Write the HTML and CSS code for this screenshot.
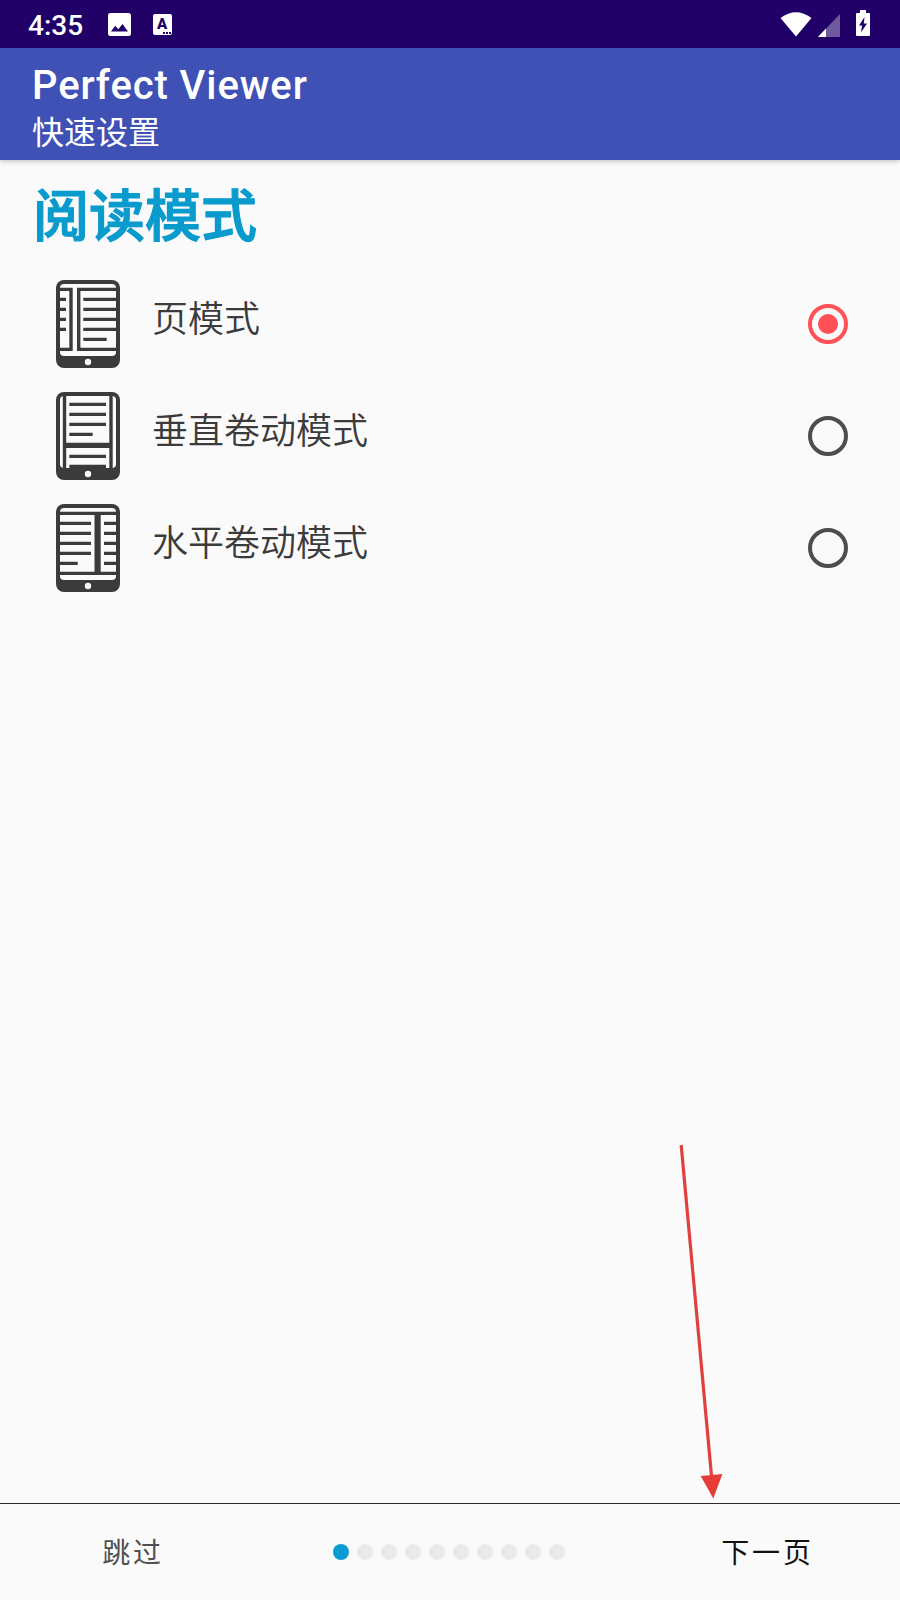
FILE: index.html
```html
<!DOCTYPE html>
<html lang="zh-CN">
<head>
<meta charset="utf-8">
<title>Perfect Viewer</title>
<link rel="stylesheet" href="styles.css">
</head>
<body>
<div class="screen">
  <div class="status-bar">
    <span class="clock">4:35</span>
    <svg class="status-photo" width="23" height="23" viewBox="0 0 23 23"><path fill="#fff" fill-rule="evenodd" d="M2.500 0h18a2.500 2.500 0 0 1 2.500 2.500v18a2.500 2.500 0 0 1-2.500 2.500h-18a2.500 2.500 0 0 1-2.500-2.500v-18a2.500 2.500 0 0 1 2.500-2.500zM3 18.500h17L14.500 11 10.300 16.300 7.300 12.800z"/></svg>
    <span class="status-input">A<svg class="input-dots" width="8" height="2" viewBox="0 0 8 2"><path fill="#210068" d="M0 0h2v2H0zM3 0h2v2H3zM6 0h2v2H6z"/></svg></span>
    <svg class="status-wifi" width="32" height="25" viewBox="0 0 32 25"><path fill="#fff" d="M0.500 6Q16-5.500 31.500 6L16 24.500z"/></svg>
    <svg class="status-signal" width="22" height="23" viewBox="0 0 22 23"><path fill="#fff" fill-opacity=".35" d="M22 0v23H0z"/><path fill="#fff" d="M8 14.500V23H0z"/></svg>
    <svg class="status-battery" width="14" height="26" viewBox="0 0 14 26"><path fill="#fff" fill-rule="evenodd" d="M4 0h6v3h3q1 0 1 1v21q0 1-1 1H1q-1 0-1-1V4q0-1 1-1h3zM8.500 7L3 15.500h3L5 22.500l6-9H7.800z"/></svg>
  </div>
  <header class="app-bar">
    <div class="app-title">Perfect Viewer</div>
    <div class="app-subtitle">快速设置</div>
  </header>
  <main class="content">
    <h1 class="heading">阅读模式</h1>
    <div class="option">
      <svg class="device" width="64" height="88" viewBox="0 0 64 88">
        <rect width="64" height="88" rx="8" fill="#3b3b3b"/>
        <rect x="4" y="4" width="56" height="72" rx="4" fill="#fafafa"/>
        <circle cx="32" cy="82" r="3.200" fill="#fafafa"/>
        <path class="ink" d="M4 9.400H15V69.400H4M60 9.400H22.700V69.400H60M4 19.400h6M4 29.400h6M4 39.400h6M4 49.400h6M27.300 19.400H60M27.300 29.400H60M27.300 39.400H60M27.300 49.400H60M27.300 59.400H50.700"/>
      </svg>
      <span class="label">页模式</span>
      <span class="radio checked"></span>
    </div>
    <div class="option">
      <svg class="device" width="64" height="88" viewBox="0 0 64 88">
        <rect width="64" height="88" rx="8" fill="#3b3b3b"/>
        <rect x="4" y="4" width="56" height="72" rx="4" fill="#fafafa"/>
        <circle cx="32" cy="82" r="3.200" fill="#fafafa"/>
        <path class="ink" d="M8.500 4V76M55 4V76M13.300 12.400H50M13.300 22.400H50M13.300 32.400H50M13.300 42.400H36.700M13.300 64.400H50M13.300 74.400H50"/>
        <path fill="#3b3b3b" d="M8 50.700h47v5.300H8z"/>
      </svg>
      <span class="label">垂直卷动模式</span>
      <span class="radio"></span>
    </div>
    <div class="option">
      <svg class="device" width="64" height="88" viewBox="0 0 64 88">
        <rect width="64" height="88" rx="8" fill="#3b3b3b"/>
        <rect x="4" y="4" width="56" height="72" rx="4" fill="#fafafa"/>
        <circle cx="32" cy="82" r="3.200" fill="#fafafa"/>
        <path class="ink" d="M4 9.400H60M4 69.400H60M4 19.400H35M4 29.400H35M4 39.400H35M4 49.400H35M4 59.400H21.700M48 19.400H60M48 29.400H60M48 39.400H60M48 49.400H60M48 59.400H60"/>
        <path fill="#3b3b3b" d="M38.500 9h6.200v60h-6.200z"/>
      </svg>
      <span class="label">水平卷动模式</span>
      <span class="radio"></span>
    </div>
  </main>
  <footer class="footer">
    <span class="skip">跳过</span>
    <div class="pager">
      <i class="dot active"></i><i class="dot"></i><i class="dot"></i><i class="dot"></i><i class="dot"></i><i class="dot"></i><i class="dot"></i><i class="dot"></i><i class="dot"></i><i class="dot"></i>
    </div>
    <span class="next">下一页</span>
  </footer>
  <svg class="arrow" width="60" height="360" viewBox="0 0 60 360"><path stroke="#e0413f" stroke-width="3.200" d="M11.200 5L41.500 336"/><path fill="#e53c3a" d="M30.700 336L52.400 334 43.300 358.500z"/></svg>
</div>
</body>
</html>
```
FILE: styles.css
```css
* { box-sizing: border-box; }
body {
  margin: 0;
  background: #fafafa;
  font-family: Roboto, "Noto Sans CJK SC", sans-serif;
}
.screen {
  position: relative;
  width: 900px;
  height: 1600px;
  display: flex;
  flex-direction: column;
  background: #fafafa;
  overflow: hidden;
}
.status-bar {
  height: 48px;
  flex: none;
  display: flex;
  align-items: center;
  padding: 0 30px 0 28px;
  background: #210068;
  color: #fff;
}
.clock {
  width: 79.5px;
  font-size: 28px;
  font-weight: 500;
  line-height: 48px;
  padding-top: 3px;
}
.status-input {
  position: relative;
  width: 19px;
  height: 21px;
  margin-left: 22px;
  border-radius: 2px;
  background: #fff;
  color: #210068;
  font-size: 15px;
  font-weight: 900;
  line-height: 20px;
  text-align: center;
}
.input-dots { position: absolute; right: 1px; bottom: 1px; }
.status-wifi { margin-left: auto; }
.status-signal { margin: 2px 0 0 6px; }
.status-battery { margin: 0 0 2px 16px; }
.app-bar {
  height: 112px;
  flex: none;
  padding: 14px 32px 0;
  background: #3f51b5;
  color: #fff;
  box-shadow: 0 1px 5px rgba(0, 0, 0, .25);
}
.app-title {
  font-size: 40px;
  font-weight: 500;
  line-height: 48px;
  letter-spacing: 0.9px;
}
.app-subtitle {
  padding-top: 1px;
  font-size: 32px;
  line-height: 44px;
}
.content { flex: 1; }
.heading {
  margin: 0;
  height: 108px;
  padding: 17px 33px 0;
  color: #0a9bcd;
  font-size: 56px;
  font-weight: 500;
  line-height: 80px;
  -webkit-text-stroke: 1.2px #0a9bcd;
}
.option {
  height: 112px;
  display: flex;
  align-items: center;
  padding: 0 52px 0 56px;
}
.device { flex: none; }
.ink { fill: none; stroke: #3b3b3b; stroke-width: 3.4; }
.label {
  flex: 1;
  margin-left: 32px;
  padding-bottom: 9px;
  color: #3b3b3b;
  font-size: 36px;
  font-weight: 350;
  line-height: 48px;
}
.radio {
  display: grid;
  place-items: center;
  width: 40px;
  height: 40px;
  border: 4px solid #4d4d4d;
  border-radius: 50%;
}
.radio.checked { border-color: #ff5056; }
.radio.checked::before {
  content: "";
  width: 20px;
  height: 20px;
  border-radius: 50%;
  background: #ff5056;
}
.footer {
  height: 97px;
  flex: none;
  display: grid;
  grid-template-columns: 266px 1fr 266px;
  align-items: center;
  border-top: 1px solid #2b2b2b;
  font-size: 28px;
  letter-spacing: 2.8px;
  text-align: center;
}
.skip { padding-bottom: 2px; color: #505050; }
.next { padding: 0 0 2px 1px; color: #111; }
.pager { display: flex; justify-content: center; gap: 8px; padding-right: 2px; }
.dot { width: 16px; height: 16px; border-radius: 50%; background: #e9e9e9; }
.dot.active { background: #0a9bd2; }
.arrow { position: absolute; left: 670px; top: 1140px; }
```
